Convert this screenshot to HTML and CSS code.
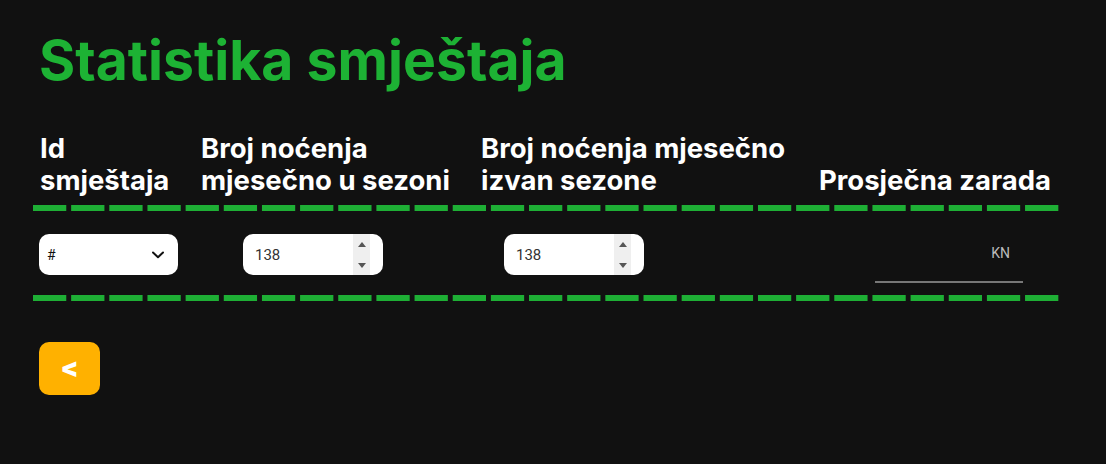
FILE: index.html
```html
<!DOCTYPE html>
<html lang="hr">
<head>
<meta charset="utf-8">
<title>Statistika smještaja</title>
<link rel="stylesheet" href="styles.css">
</head>
<body>
<main class="page">
  <h1 class="title">Statistika smještaja</h1>
  <section class="table">
    <div class="row head">
      <div class="cell c1">Id<br>smještaja</div>
      <div class="cell c2">Broj noćenja<br>mjesečno u sezoni</div>
      <div class="cell c3">Broj noćenja mjesečno<br>izvan sezone</div>
      <div class="cell c4">Prosječna zarada</div>
    </div>
    <div class="dash"></div>
    <div class="row body">
      <div class="cell c1">
        <div class="select">
          <span>#</span>
          <svg class="chev" width="12" height="8" viewBox="0 0 12 8"><path d="M1 1.5 L6 6.2 L11 1.5" fill="none" stroke="#111" stroke-width="2" stroke-linecap="round" stroke-linejoin="round"/></svg>
        </div>
      </div>
      <div class="cell c2">
        <div class="num"><span class="val">138</span><span class="spin"><i class="up"></i><i class="down"></i></span></div>
      </div>
      <div class="cell c3">
        <div class="num"><span class="val">138</span><span class="spin"><i class="up"></i><i class="down"></i></span></div>
      </div>
      <div class="cell c4">
        <div class="money"><span class="kn">KN</span></div>
      </div>
    </div>
    <div class="dash"></div>
  </section>
  <button class="back">&lt;</button>
</main>
</body>
</html>
```

FILE: styles.css
```css
* { box-sizing: border-box; }
html, body { margin: 0; padding: 0; }
body {
  background: #111111;
  width: 1106px;
  height: 464px;
  overflow: hidden;
  font-family: Inter, "Noto Sans", sans-serif;
}
.page { padding: 28px 0 0 0; }
.title {
  margin: 0 0 0 39px;
  color: #1db234;
  font-size: 55.3px;
  font-weight: 700;
  letter-spacing: 0;
  line-height: 64px;
}
.table {
  margin: 40px 0 0 33px;
  width: 1026px;
}
.row {
  display: grid;
  grid-template-columns: 161px 280px 338px 247px;
}
.head {
  align-items: end;
  color: #ffffff;
  font-size: 27.5px;
  font-weight: 700;
  line-height: 32px;
  padding-bottom: 9px;
}
.head .cell { padding-left: 7px; }
.dash {
  height: 6px;
  background-image: linear-gradient(to right, #1eaf35 0, #1eaf35 calc(100% - 4.5px), transparent calc(100% - 4.5px));
  background-size: calc((100% + 4.5px) / 27) 100%;
  background-repeat: repeat-x;
}
.body { height: 84px; padding-top: 23px; }
.body .c1 { padding-left: 6px; }
.body .c2 { padding-left: 49px; }
.body .c3 { padding-left: 30px; }
.body .c4 { padding-left: 63px; }
.select {
  width: 139px;
  height: 41px;
  background: #fff;
  border-radius: 10px;
  display: flex;
  align-items: center;
  justify-content: space-between;
  padding: 0 14px 0 8px;
  font-family: Roboto, sans-serif;
  font-size: 14px;
  color: #111;
}
.chev { margin-top: 1px; }
.num {
  width: 140px;
  height: 41px;
  background: #fff;
  border-radius: 10px;
  display: flex;
  align-items: stretch;
  padding: 0 13px 0 12px;
  font-family: Roboto, sans-serif;
  font-size: 15px;
  color: #333;
}
.val { flex: 1; display: flex; align-items: center; }
.spin {
  width: 17px;
  background: #efefef;
  display: flex;
  flex-direction: column;
  align-items: center;
  justify-content: space-between;
  padding: 8px 0 7px;
}
.spin i { display: block; width: 0; height: 0; border-left: 4px solid transparent; border-right: 4px solid transparent; }
.spin .up { border-bottom: 5px solid #555; }
.spin .down { border-top: 5px solid #555; }
.money {
  width: 148px;
  height: 49px;
  border-bottom: 2px solid #777;
  text-align: right;
  padding: 8px 13px 0 0;
}
.kn {
  font-family: Roboto, sans-serif;
  font-size: 14px;
  color: #bbbbbb;
}
.back {
  display: flex;
  align-items: center;
  justify-content: center;
  margin: 41px 0 0 39px;
  width: 61px;
  height: 53px;
  border: 0;
  border-radius: 10px;
  background: #ffb100;
  color: #fff;
  font-family: Inter, sans-serif;
  font-weight: 900;
  font-size: 26px;
  padding: 0 0 3px;
}
```
